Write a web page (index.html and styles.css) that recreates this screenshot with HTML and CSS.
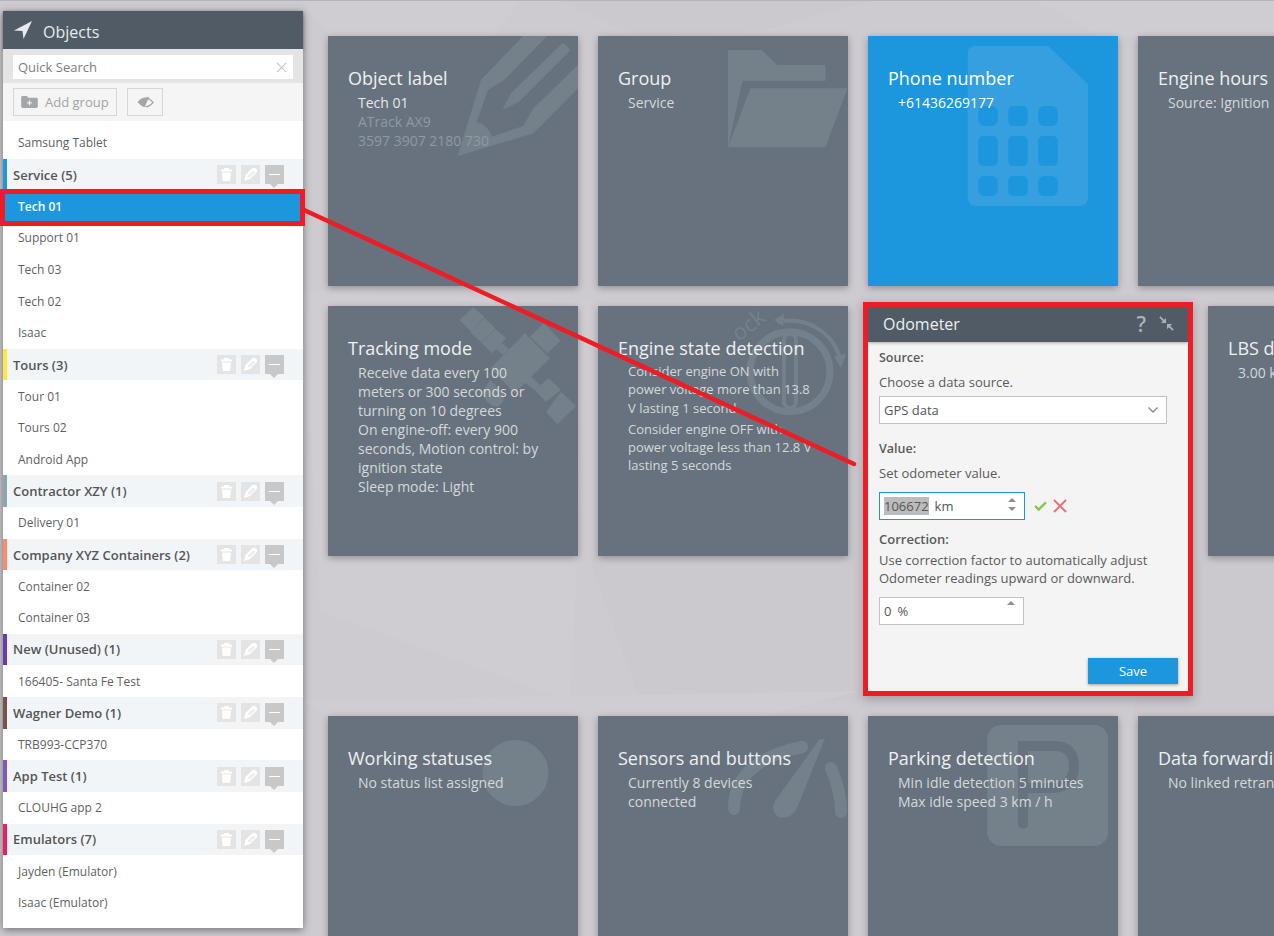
FILE: index.html
```html
<!DOCTYPE html>
<html lang="en">
<head>
<meta charset="utf-8">
<title>Objects</title>
<link rel="stylesheet" href="styles.css">
</head>
<body>
<svg class="backdrop" viewBox="0 0 1274 936" aria-hidden="true">
  <polygon class="bg-a" points="303,0 520,0 420,130 330,36"/>
  <polygon class="bg-b" points="560,0 870,0 760,30 640,36"/>
  <polygon class="bg-a" points="303,290 590,300 570,700 320,610"/>
  <polygon class="bg-b" points="590,560 860,300 860,700 640,700"/>
  <polygon class="bg-a" points="303,700 860,690 760,716 330,716"/>
  <polygon class="bg-b" points="1190,560 1274,540 1274,716 1130,716"/>
  <polygon class="bg-a" points="1040,0 1274,0 1274,36 1100,36"/>
</svg>

<aside class="sidebar">
  <header class="side-head">
    <svg class="nav-icon" viewBox="0 0 18 18"><path d="M18 0L0 9.500 8.500 10 9.500 18Z"/></svg>
    <span>Objects</span>
  </header>
  <div class="search-strip">
    <div class="search"><span>Quick Search</span>
      <svg class="clear" viewBox="0 0 12 12"><path d="M1 1L11 11M11 1L1 11"/></svg>
    </div>
  </div>
  <div class="side-tools">
    <div class="tool tool-add">
      <svg class="tool-ico" viewBox="0 0 18 13"><path class="ico-fill" d="M0 1.500Q0 0 1.500 0H6L8 2H16.500Q18 2 18 3.500V11.500Q18 13 16.500 13H1.500Q0 13 0 11.500Z"/><path class="ico-plus" d="M9 5V10M6.500 7.500H11.500"/></svg>
      <span>Add group</span>
    </div>
    <div class="tool tool-eye">
      <svg class="eye-ico" viewBox="0 0 18 12"><path d="M1 6.500Q5 2 9 2T17 6.500Q13 11 9 11"/><path class="eye-fill" d="M1 6.500Q4.500 2 9 1.500L13 .5 8 11.500Q4.500 10.500 1 6.500Z"/></svg>
    </div>
  </div>

  <div class="list">
    <div class="item item-top">Samsung Tablet</div>

    <div class="group c-service"><span>Service (5)</span><div class="g-btns">
      <i class="g-btn"><svg viewBox="0 0 19 19"><use href="#trash"/></svg></i><i class="g-btn"><svg viewBox="0 0 19 19"><use href="#pen"/></svg></i><i class="g-btn g-min"></i></div></div>
    <div class="item sel">Tech 01</div>
    <div class="item">Support 01</div>
    <div class="item">Tech 03</div>
    <div class="item">Tech 02</div>
    <div class="item">Isaac</div>

    <div class="group c-tours"><span>Tours (3)</span><div class="g-btns">
      <i class="g-btn"><svg viewBox="0 0 19 19"><use href="#trash"/></svg></i><i class="g-btn"><svg viewBox="0 0 19 19"><use href="#pen"/></svg></i><i class="g-btn g-min"></i></div></div>
    <div class="item">Tour 01</div>
    <div class="item">Tours 02</div>
    <div class="item">Android App</div>

    <div class="group c-contractor"><span>Contractor XZY (1)</span><div class="g-btns">
      <i class="g-btn"><svg viewBox="0 0 19 19"><use href="#trash"/></svg></i><i class="g-btn"><svg viewBox="0 0 19 19"><use href="#pen"/></svg></i><i class="g-btn g-min"></i></div></div>
    <div class="item">Delivery 01</div>

    <div class="group c-company"><span>Company XYZ Containers (2)</span><div class="g-btns">
      <i class="g-btn"><svg viewBox="0 0 19 19"><use href="#trash"/></svg></i><i class="g-btn"><svg viewBox="0 0 19 19"><use href="#pen"/></svg></i><i class="g-btn g-min"></i></div></div>
    <div class="item">Container 02</div>
    <div class="item">Container 03</div>

    <div class="group c-new"><span>New (Unused) (1)</span><div class="g-btns">
      <i class="g-btn"><svg viewBox="0 0 19 19"><use href="#trash"/></svg></i><i class="g-btn"><svg viewBox="0 0 19 19"><use href="#pen"/></svg></i><i class="g-btn g-min"></i></div></div>
    <div class="item">166405- Santa Fe Test</div>

    <div class="group c-wagner"><span>Wagner Demo (1)</span><div class="g-btns">
      <i class="g-btn"><svg viewBox="0 0 19 19"><use href="#trash"/></svg></i><i class="g-btn"><svg viewBox="0 0 19 19"><use href="#pen"/></svg></i><i class="g-btn g-min"></i></div></div>
    <div class="item">TRB993-CCP370</div>

    <div class="group c-app"><span>App Test (1)</span><div class="g-btns">
      <i class="g-btn"><svg viewBox="0 0 19 19"><use href="#trash"/></svg></i><i class="g-btn"><svg viewBox="0 0 19 19"><use href="#pen"/></svg></i><i class="g-btn g-min"></i></div></div>
    <div class="item">CLOUHG app 2</div>

    <div class="group c-emu"><span>Emulators (7)</span><div class="g-btns">
      <i class="g-btn"><svg viewBox="0 0 19 19"><use href="#trash"/></svg></i><i class="g-btn"><svg viewBox="0 0 19 19"><use href="#pen"/></svg></i><i class="g-btn g-min"></i></div></div>
    <div class="item">Jayden (Emulator)</div>
    <div class="item">Isaac (Emulator)</div>
  </div>
</aside>

<main class="main">
  <div class="row">
    <section class="tile">
      <svg class="wm" viewBox="0 0 250 250"><path d="M153 44L195 0H219L176 44 160 54 148.700 85.700Q160 89 164 100.700L195 90 205.500 72.300 250 29V52.300L205.500 97.300 129.700 120Z"/><path d="M174.500 74L183 57.300 234.800 6.700 242.700 14 191 65.700Z"/></svg>
      <h2>Object label</h2>
      <div class="t-body"><div class="strong">Tech 01</div><div class="dim">ATrack AX9</div><div class="dim">3597 3907 2180 730</div></div>
    </section>
    <section class="tile">
      <svg class="wm" viewBox="0 0 250 250"><path d="M130 14H163.800L179 29H227.500V44.700H144.500L130 111.300Z"/><path d="M152.400 52.300H249.500L227.500 111.300H130Z"/></svg>
      <h2>Group</h2>
      <div class="t-body">Service</div>
    </section>
    <section class="tile tile-blue">
      <svg class="wm" viewBox="0 0 250 250"><path d="M107 10H180L220 48V161Q220 170 211 170H108Q99.700 170 99.700 161V18Q99.700 10 107 10Z"/>
        <g class="holes"><rect x="110.300" y="70" width="19.400" height="20" rx="6"/><rect x="140.300" y="70" width="19.400" height="20" rx="5"/><rect x="170.300" y="70" width="19.400" height="20" rx="6"/><rect x="110.300" y="100" width="19.400" height="30" rx="5"/><rect x="140.300" y="100" width="19.400" height="30" rx="5"/><rect x="170.300" y="100" width="19.400" height="30" rx="5"/><rect x="110.300" y="140" width="19.400" height="20" rx="6"/><rect x="140.300" y="140" width="19.400" height="20" rx="5"/><rect x="170.300" y="140" width="19.400" height="20" rx="6"/></g></svg>
      <h2>Phone number</h2>
      <div class="t-body">+61436269177</div>
    </section>
    <section class="tile">
      <h2>Engine hours</h2>
      <div class="t-body">Source: Ignition</div>
    </section>
  </div>

  <div class="row row-tall">
    <section class="tile">
      <svg class="wm" viewBox="0 0 250 250"><path d="M145.200 1.300L156.600 11.300 143.500 25.700 131.500 14Z"/><path d="M156.600 12.300L167.600 22.300 153.800 36.700 142.500 26.700Z"/><path d="M167.600 23.300L178 32.300 164.200 47.300 153.800 37.300Z"/><path d="M168 43L174 37 181 43 175 49Z"/><path d="M196.900 27.300L222 52.300 186.600 87.300 162.500 62.300Z"/><path d="M215.800 17.300L232.400 34.700 219.300 47.300 202 30.700Z"/><path d="M198 67L212.400 79 207 84 192 73Z"/><path d="M221 72.300L233 84 217.600 95.700 207 84Z"/><path d="M233 85.700L248 100 229.600 118 218 106Z"/><path d="M154 85.700L162.500 74 176 88.700Q176 100 167.600 100.700Q158 99 154 85.700Z"/></svg>
      <h2>Tracking mode</h2>
      <div class="t-body"><div>Receive data every 100 meters or 300 seconds or turning on 10 degrees</div><div>On engine-off: every 900 seconds, Motion control: by ignition state</div><div>Sleep mode: Light</div></div>
    </section>
    <section class="tile">
      <svg class="wm wm-line" viewBox="0 0 250 250"><circle cx="192" cy="65.700" r="40" stroke-width="7"/><rect x="186" y="28" width="12" height="74" rx="6" stroke-width="4"/><path d="M180 16A52 52 0 0 1 242 52" stroke-width="4"/><path class="wm-arrow" d="M176 14L186 8 185 20Z"/><path class="wm-arrow" d="M236 50L248 48 243 62Z"/><text class="wm-text" x="141" y="36" transform="rotate(-38 141 36)">ock</text></svg>
      <h2>Engine state detection</h2>
      <div class="t-body t-small"><p>Consider engine ON with power voltage more than 13.8 V lasting 1 second</p><p>Consider engine OFF with power voltage less than 12.8 V lasting 5 seconds</p></div>
    </section>

    <section class="panel">
      <header class="panel-head"><span>Odometer</span>
        <div class="panel-ico"><span class="q">?</span>
          <svg class="shrink" viewBox="0 0 16 16"><path d="M1 1L6 6M15 15L10 10"/><path class="shrink-head" d="M7.500 2V7.500H2ZM8.500 14V8.500H14Z"/></svg>
        </div>
      </header>
      <div class="panel-body">
        <div class="f-label f-first">Source:</div>
        <div class="f-help">Choose a data source.</div>
        <div class="field f-select"><span>GPS data</span><svg class="chev" viewBox="0 0 10 6"><path d="M.5 .5L5 5 9.500 .5"/></svg></div>
        <div class="f-label">Value:</div>
        <div class="f-help">Set odometer value.</div>
        <div class="value-row">
          <div class="field f-num f-focus"><span class="sel-text">106672</span><span class="unit">km</span>
            <span class="spin"><i class="up"></i><i class="down"></i></span></div>
          <svg class="ok" viewBox="0 0 14 11"><path d="M1 5.500L5 9.500 13 1.500"/></svg>
          <svg class="no" viewBox="0 0 14 14"><path d="M1 1L13 13M13 1L1 13"/></svg>
        </div>
        <div class="f-label f-corr">Correction:</div>
        <div class="f-help f-multi">Use correction factor to automatically adjust Odometer readings upward or downward.</div>
        <div class="field f-num f-pct"><span>0</span><span class="unit">%</span><span class="spin spin-one"><i class="up"></i></span></div>
        <div class="actions"><button class="save" type="button">Save</button></div>
      </div>
    </section>

    <section class="tile">
      <h2>LBS detection</h2>
      <div class="t-body">3.00 km</div>
    </section>
  </div>

  <div class="row">
    <section class="tile">
      <svg class="wm" viewBox="0 0 250 250"><circle cx="187.400" cy="57" r="33"/></svg>
      <h2>Working statuses</h2>
      <div class="t-body">No status list assigned</div>
    </section>
    <section class="tile">
      <svg class="wm" viewBox="0 0 250 250"><path d="M227 22L199 92Q193 104 181 101 172 96 177 85L221 24Z"/><path class="wm-stroke" d="M136 93Q136 45 204 31"/><path class="wm-stroke" d="M233 52Q243 75 243 96"/></svg>
      <h2>Sensors and buttons</h2>
      <div class="t-body">Currently 8 devices connected</div>
    </section>
    <section class="tile">
      <svg class="wm" viewBox="0 0 250 250"><rect x="119.300" y="9" width="120.700" height="121" rx="14"/><path class="p-mark" d="M155 108V30H186Q206 30 206 50T186 72H155"/></svg>
      <h2>Parking detection</h2>
      <div class="t-body">Min idle detection 5 minutes<br>Max idle speed 3 km / h</div>
    </section>
    <section class="tile">
      <h2>Data forwarding</h2>
      <div class="t-body">No linked retranslators</div>
    </section>
  </div>
</main>

<svg class="callout" viewBox="0 0 1274 936" aria-hidden="true"><path d="M304 210L854 464"/></svg>

<svg class="defs" aria-hidden="true">
  <symbol id="trash" viewBox="0 0 19 19"><path d="M4 4.500H15V6.500H4ZM7 3H12V4.500H7ZM5 7.500H14L13.200 16H5.800Z"/></symbol>
  <symbol id="pen" viewBox="0 0 19 19"><path d="M3 16L4.500 10 11 3.500Q13 2 15 3.500T15.500 7.500L9 14ZM6.500 11.500L12 5.800 12.800 6.600 7.300 12.300ZM9 12.500L14 7.300 13.600 6.500 8.500 12Z" fill-rule="evenodd"/></symbol>
</svg>
</body>
</html>
```

FILE: styles.css
```css
* { box-sizing: border-box; }
html, body { margin: 0; padding: 0; }
body {
  position: relative;
  display: flex;
  width: 1274px;
  height: 936px;
  overflow: hidden;
  background: #cdcbd0;
  border-top: 1px solid #b5b4b8;
  font-family: "Open Sans", "Liberation Sans", sans-serif;
  color: #555;
}
.backdrop { position: absolute; left: 0; top: 0; width: 1274px; height: 936px; }
.bg-a { fill: #cfcdd2; }
.bg-b { fill: #cbc9ce; }
.defs { position: absolute; width: 0; height: 0; }

/* sidebar */
.sidebar {
  position: relative;
  flex: 0 0 300px;
  margin: 10px 0 0 3px;
  height: 917px;
  background: #fff;
  box-shadow: 0 2px 8px rgba(0, 0, 0, .45);
}
.side-head {
  display: flex;
  align-items: center;
  height: 38px;
  padding: 3px 0 0 11px;
  gap: 11px;
  background: #505b66;
  color: #e8eaec;
  font-size: 16px;
  box-shadow: 0 1px 3px rgba(0, 0, 0, .3);
}
.nav-icon { width: 18px; height: 18px; margin-top: -3px; fill: #e8eaec; }
.search-strip { height: 34px; padding: 6px 10px 4px; background: #e4e4e4; }
.search {
  display: flex;
  align-items: center;
  justify-content: space-between;
  height: 24px;
  padding: 0 6px 0 5px;
  background: #fff;
  color: #7d7d7d;
  font-size: 13px;
}
.clear { width: 11px; height: 11px; fill: none; stroke: #c4c4c4; stroke-width: 1.200; }
.side-tools { display: flex; gap: 10px; height: 38px; padding: 5px 10px; background: #f5f5f5; }
.tool {
  display: flex;
  align-items: center;
  height: 28px;
  border: 1px solid #d5d7da;
  color: #a0a4a8;
  font-size: 13px;
}
.tool-add { width: 104px; padding-left: 7px; gap: 7px; }
.tool-eye { width: 36px; justify-content: center; }
.tool-ico { width: 17px; height: 12px; }
.ico-fill { fill: #a3a7ab; }
.ico-plus { fill: none; stroke: #f5f5f5; stroke-width: 1.300; }
.eye-ico { width: 17px; height: 12px; fill: none; stroke: #a3a7ab; stroke-width: 1.300; }
.eye-fill { fill: #a3a7ab; stroke: none; }

.list { font-size: 12px; }
.item {
  display: flex;
  align-items: center;
  height: 31.667px;
  padding-left: 15px;
  color: #5f5f5f;
}
.item-top { height: 37.800px; padding-top: 5px; }
.item.sel {
  position: relative;
  background: #1c96dd;
  color: #fff;
  font-weight: 600;
}
.item.sel::after {
  content: "";
  box-sizing: border-box;
  position: absolute;
  left: -3px;
  top: -1px;
  width: 305px;
  height: 37px;
  border: 5px solid #ee1c25;
}
.group {
  display: flex;
  align-items: center;
  justify-content: space-between;
  height: 31.667px;
  padding: 0 19px 0 6px;
  border-left: 4px solid #999;
  background: #f2f5f8;
  color: #555;
  font-size: 13px;
  font-weight: 600;
}
.c-service { border-left-color: #1c96dd; }
.c-tours { border-left-color: #fde93b; }
.c-contractor { border-left-color: #8da5b2; }
.c-company { border-left-color: #ff8a65; }
.c-new { border-left-color: #673ab7; }
.c-wagner { border-left-color: #795548; }
.c-app { border-left-color: #7e57c2; }
.c-emu { border-left-color: #e91e63; }
.g-btns { display: flex; gap: 5px; }
.g-btn {
  position: relative;
  display: block;
  width: 19px;
  height: 19px;
  background: #e4e4e4;
}
.g-btn svg { display: block; width: 19px; height: 19px; fill: #fff; }
.g-min { background: #c8c8c8; }
.g-min::before {
  content: "";
  position: absolute;
  left: 4px;
  top: 9px;
  width: 11px;
  height: 1px;
  background: #fff;
}
.g-min::after {
  content: "";
  position: absolute;
  left: 5px;
  top: 19px;
  border: 4px solid transparent;
  border-top-color: #c8c8c8;
  border-bottom: 0;
}

/* main */
.main {
  flex: 1;
  min-width: 0;
  height: 935px;
  padding: 35px 0 0 25px;
  overflow: hidden;
  position: relative;
}
.row { display: flex; gap: 20px; margin-bottom: 20px; }
.row-tall { height: 390px; align-items: flex-start; }
.tile {
  position: relative;
  flex: 0 0 250px;
  height: 250px;
  padding: 30px 30px 0 20px;
  background: #67727e;
  color: #d5d8db;
  font-size: 14px;
  line-height: 19px;
  box-shadow: 0 2px 7px rgba(0, 0, 0, .3);
}
.tile h2 {
  position: relative;
  margin: 0 0 3px;
  font-size: 18px;
  font-weight: 400;
  line-height: 24px;
  color: #eef0f1;
  white-space: nowrap;
}
.t-body { position: relative; padding-left: 10px; }
.strong { color: #e6e8ea; }
.dim { color: #8f99a3; }
.t-small { font-size: 13px; line-height: 18.300px; margin-top: -1px; }
.t-small p { margin: 0 0 2.700px; }
.tile-blue { background: #1c96dd; color: #fff; }
.tile-blue h2 { color: #fff; }
.wm { position: absolute; left: 0; top: 0; width: 250px; height: 250px; fill: #75818a; }
.tile-blue .wm { fill: #369fe0; }
.holes { fill: #1c96dd; }
.wm-line { fill: none; stroke: #75818a; }
.wm-arrow { fill: #75818a; stroke: none; }
.wm-text { fill: #75818a; stroke: none; font-size: 22px; font-family: "Open Sans", sans-serif; }
.wm-stroke { fill: none; stroke: #75818a; stroke-width: 12; stroke-linecap: round; }
.p-mark { fill: none; stroke: #67727e; stroke-width: 10; stroke-linecap: round; }

/* odometer panel */
.panel {
  position: relative;
  flex: 0 0 320px;
  height: 384px;
  margin-top: 1px;
  background: #f4f4f4;
  outline: 5px solid #ee1c25;
  box-shadow: 0 3px 10px 5px rgba(0, 0, 0, .25);
  font-size: 13px;
  line-height: 18px;
  color: #5a5a5a;
}
.panel-head {
  display: flex;
  align-items: center;
  justify-content: space-between;
  height: 35px;
  padding: 0 14px 2px 15px;
  background: #505b66;
  color: #eceeef;
  font-size: 16px;
  box-shadow: 0 1px 3px rgba(0, 0, 0, .3);
}
.panel-ico { display: flex; align-items: center; gap: 13px; }
.q { font-size: 21px; font-weight: 600; color: #aab0b6; line-height: 20px; }
.shrink { width: 15px; height: 15px; fill: none; stroke: #aab0b6; stroke-width: 2; }
.shrink-head { fill: #aab0b6; stroke: none; }
.panel-body { padding: 0 10px 0 11px; }
.f-label { margin-top: 16px; font-size: 12.500px; font-weight: 600; color: #5a5a5a; }
.f-first { margin-top: 7px; }
.f-corr { margin-top: 10px; font-size: 13px; }
.f-help { margin-top: 6px; }
.f-multi { margin-top: 3px; width: 285px; }
.field {
  display: flex;
  align-items: center;
  height: 28px;
  padding: 0 4px;
  background: #fff;
  border: 1px solid #bfc3c8;
  color: #555;
  font-size: 13px;
}
.f-select { justify-content: space-between; width: 288px; margin-top: 5px; padding-right: 8px; }
.chev { width: 10px; height: 6px; fill: none; stroke: #888; stroke-width: 1.300; }
.value-row { display: flex; align-items: center; margin-top: 10px; }
.f-num { position: relative; width: 146px; }
.f-focus { border-color: #1c96dd; }
.sel-text { background: #bcbcbc; }
.unit { margin-left: 6px; }
.spin {
  position: absolute;
  right: 8px;
  top: 5px;
  display: flex;
  flex-direction: column;
  gap: 5px;
}
.spin-one { top: 3px; }
.spin i { display: block; border: 4px solid transparent; }
.up { border-top: 0 !important; border-bottom-color: #8a8f96 !important; }
.down { border-bottom: 0 !important; border-top-color: #8a8f96 !important; }
.ok { width: 13px; height: 10px; margin-left: 9px; fill: none; stroke: #8bc34a; stroke-width: 2.500; }
.no { width: 14px; height: 14px; margin-left: 6px; fill: none; stroke: #e57373; stroke-width: 2; }
.f-pct { margin-top: 10px; width: 145px; }
.actions { display: flex; justify-content: flex-end; margin-top: 33px; }
.save {
  width: 90px;
  height: 26px;
  padding: 0;
  border: 0;
  background: #1c96dd;
  color: #fff;
  font: 13px "Open Sans", sans-serif;
  box-shadow: 0 1px 3px rgba(0, 0, 0, .35);
}
.callout {
  position: absolute;
  left: 0;
  top: -1px;
  width: 1274px;
  height: 936px;
  pointer-events: none;
  fill: none;
  stroke: #ee1c25;
  stroke-width: 4.500;
  stroke-linecap: round;
}
```
